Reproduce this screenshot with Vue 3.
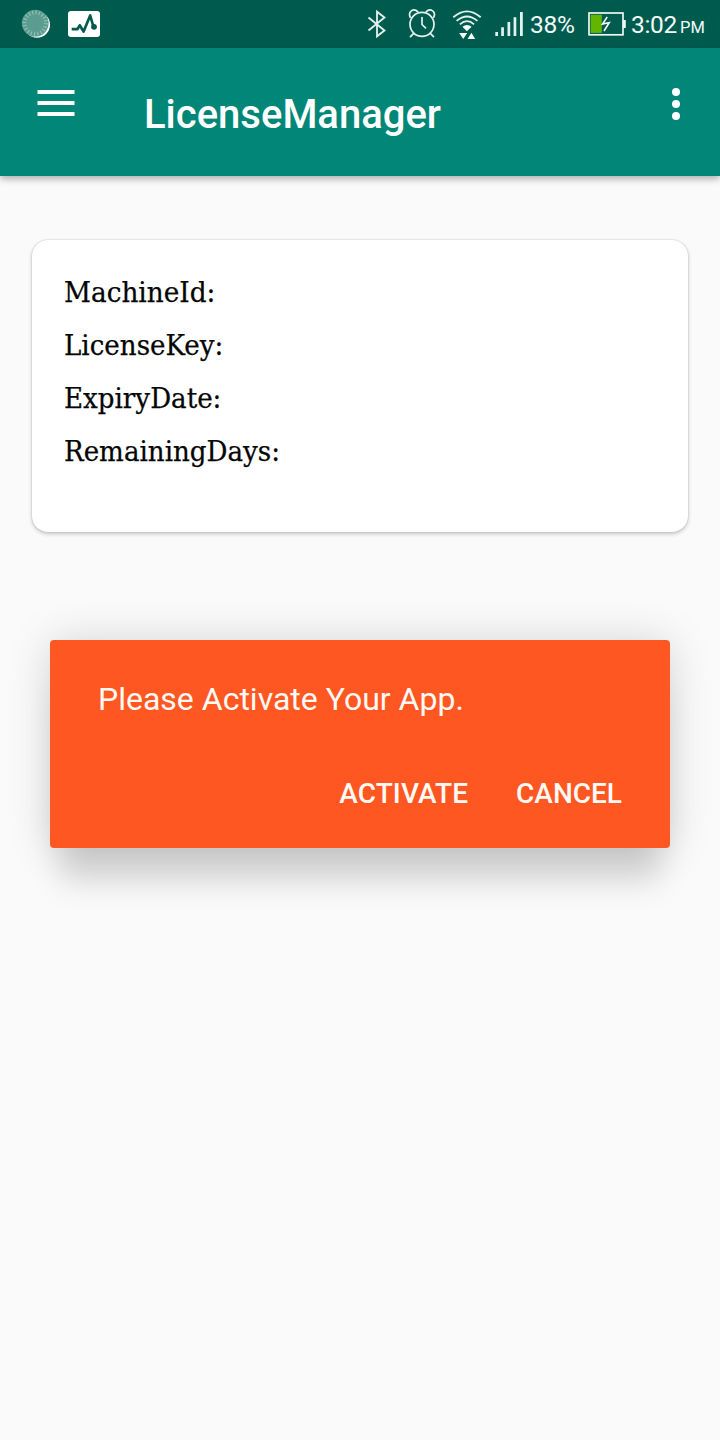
<script setup>
const fields = [
  { name: 'machine', label: 'MachineId:' },
  { name: 'license', label: 'LicenseKey:' },
  { name: 'expiry', label: 'ExpiryDate:' },
  { name: 'remaining', label: 'RemainingDays:' },
]
const actions = ['Activate', 'Cancel']
</script>

<template>
  <div class="screen">
    <div class="status">
      <svg class="i-sync" width="32" height="32" viewBox="20 8 32 32">
        <circle cx="37" cy="24.7" r="13" fill="#fff" />
        <circle cx="35.2" cy="23.2" r="13.4" fill="#5a9c8f" />
        <circle cx="35.2" cy="23.2" r="10.7" fill="none" stroke="#94c0b7" stroke-width="4" stroke-dasharray="1.1 2.26" />
      </svg>
      <svg class="i-pulse" width="32" height="28" viewBox="68 10 32 28">
        <rect x="68" y="11" width="32" height="26" rx="3" fill="#fff" />
        <path d="M71.7 29.2H77.5L79.7 25.3L83.6 31.5L90.2 15.5L93.5 27" fill="none" stroke="#005b4f" stroke-width="2.7" stroke-linejoin="round" />
        <circle cx="94" cy="26.8" r="2.9" fill="#005b4f" />
      </svg>
      <div class="right">
        <svg class="i-bt" width="20" height="30" viewBox="367 9 20 30">
          <path d="M368.5 17.5L384.5 30.5L377 36.3V11.7L384.5 17.5L368.5 30.5" fill="none" stroke="#e4f2ef" stroke-width="1.8" />
        </svg>
        <svg class="i-alarm" width="30" height="32" viewBox="407 8 30 32">
          <g fill="none" stroke="#e4f2ef" stroke-width="1.7">
            <circle cx="422" cy="24.3" r="12" />
            <path d="M410.6 17.8C407.2 11.5 413.5 7.5 418.2 12.1M433.4 17.8C436.8 11.5 430.5 7.5 425.8 12.1M413.7 33.3L410 37.2M430.3 33.3L434 37.2M422 17V24.5L426 28.3" />
          </g>
        </svg>
        <svg class="i-wifi" width="30" height="32" viewBox="452 8 30 32">
          <g fill="none" stroke="#e4f2ef" stroke-width="1.8">
            <path d="M453.3 17.3Q467 5.5 480.7 17.3M456.6 20.9Q467 12 477.4 20.9M459.9 24.3Q467 18 474.1 24.3" />
          </g>
          <path d="M462.4 26.7Q467 23.2 471.6 26.7L467 31.3ZM459.2 33H467.2L463.2 39ZM467.6 39H475.2L471.4 32.7Z" fill="#fff" />
        </svg>
        <svg class="i-signal" width="29" height="26" viewBox="495 11 29 26">
          <path d="M495.3 32H498V36H495.3ZM501.2 27.3H503.9V36H501.2ZM507.5 22H510.2V36H507.5ZM513.6 17.3H516.3V36H513.6ZM520 12H522.8V36H520Z" fill="#e4f2ef" />
        </svg>
        <span class="percent">38%</span>
        <svg class="i-battery" width="38" height="26" viewBox="588 11 38 26">
          <rect x="589" y="13" width="34" height="21.8" fill="none" stroke="#eef7f5" stroke-width="1.7" />
          <rect x="590.6" y="14.7" width="11.2" height="18.2" fill="#62b500" />
          <path d="M623 20H625.8V28H623Z" fill="#eef7f5" />
          <path d="M607.2 17L602.5 24L609.3 22.5L604 31" fill="none" stroke="#fff" stroke-width="1.5" />
        </svg>
        <span class="time">3:02</span><span class="pm">PM</span>
      </div>
    </div>

    <header class="bar">
      <svg class="menu" width="38" height="28" viewBox="0 0 38 28">
        <path d="M0.5 2H37.5M0.5 13H37.5M0.5 24H37.5" stroke="#fff" stroke-width="4" />
      </svg>
      <h1>LicenseManager</h1>
      <svg class="more" width="8" height="32" viewBox="0 0 8 32">
        <circle cx="4" cy="4" r="4" fill="#fff" />
        <circle cx="4" cy="16" r="4" fill="#fff" />
        <circle cx="4" cy="28" r="4" fill="#fff" />
      </svg>
    </header>

    <section class="card">
      <div v-for="f in fields" :key="f.name" class="field"><span :class="f.name">{{ f.label }}</span></div>
    </section>

    <section class="dialog">
      <p>Please Activate Your App.</p>
      <div class="actions">
        <button v-for="a in actions" :key="a" :class="a.toLowerCase()">{{ a }}</button>
      </div>
    </section>
  </div>
</template>

<style>
body {
  background: #fafafa;
}
</style>

<style scoped>
.screen {
  width: 720px;
  height: 1440px;
  box-sizing: border-box;
  overflow: hidden;
  background: #fafafa;
  font-family: Roboto, sans-serif;
}
svg {
  display: block;
  flex: none;
}
.status {
  display: flex;
  align-items: center;
  height: 48px;
  padding-left: 20px;
  background: #005b4f;
  color: #f4fbf9;
}
.i-pulse {
  margin-left: 16px;
}
.right {
  display: flex;
  align-items: center;
  height: 48px;
  margin-left: 267px;
  white-space: nowrap;
}
.i-alarm {
  margin-left: 20px;
}
.i-wifi {
  margin-left: 15px;
}
.i-signal {
  margin-left: 13px;
}
.percent,
.time {
  margin-top: 2px;
  font-size: 24.5px;
  letter-spacing: -0.3px;
  line-height: 48px;
}
.percent {
  width: 58px;
  margin-left: 6px;
}
.time {
  width: 49px;
  margin-left: 5px;
}
.pm {
  margin-top: 8px;
  font-size: 16.5px;
  line-height: 48px;
}
.bar {
  display: flex;
  align-items: flex-start;
  height: 128px;
  box-sizing: border-box;
  padding: 40px 40px 0 37px;
  background: #028677;
  box-shadow: 0 3px 7px rgba(0, 0, 0, 0.3);
}
.menu {
  margin-top: 2px;
}
h1 {
  flex: 1;
  margin: 3px 0 0 69px;
  color: #fff;
  font-size: 40px;
  font-weight: 500;
  line-height: 48px;
}
.card {
  height: 292px;
  box-sizing: border-box;
  margin: 64px 32px 0;
  padding: 26px 32px;
  border-radius: 16px;
  background: #fff;
  box-shadow: 0 2px 4px rgba(0, 0, 0, 0.2), 0 0 2px rgba(0, 0, 0, 0.2);
}
.field {
  height: 53px;
  color: #050505;
  font-family: "DejaVu Serif Condensed", "DejaVu Serif", serif;
  font-stretch: condensed;
  font-size: 27.5px;
  line-height: 53px;
}
.field span {
  display: inline-block;
  transform: scaleX(1.056);
  transform-origin: left center;
  -webkit-text-stroke: 0.25px #050505;
}
.field .machine {
  transform: scaleX(1.064);
}
.dialog {
  height: 208px;
  box-sizing: border-box;
  margin: 108px 50px 0;
  padding: 35px 48px 0;
  border-radius: 4px;
  background: #ff5722;
  color: #fffaf5;
  box-shadow: 0 2px 44px rgba(0, 0, 0, 0.16), 0 44px 30px -10px rgba(0, 0, 0, 0.13);
}
p {
  margin: 0;
  font-size: 32px;
  line-height: 48px;
}
.actions {
  display: flex;
  justify-content: flex-end;
  gap: 48px;
  margin-top: 47px;
}
button {
  padding: 0;
  border: 0;
  background: none;
  color: inherit;
  font: 500 28px/48px Roboto, sans-serif;
  text-transform: uppercase;
}
.activate {
  letter-spacing: 0.1px;
}
</style>
